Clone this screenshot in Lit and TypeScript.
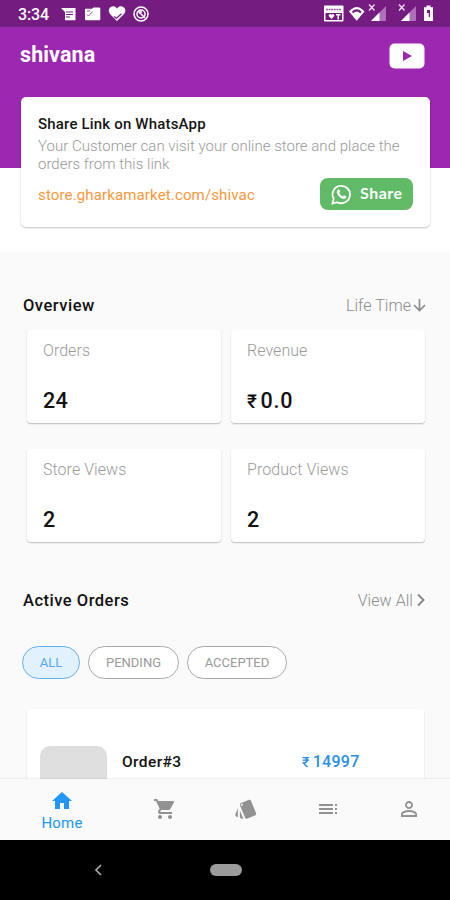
import { LitElement, html, css, svg } from "lit";
import { customElement } from "lit/decorators.js";
import { classMap } from "lit/directives/class-map.js";

const paths = {
  home: "M10 20v-6h4v6h5v-8h3L12 3 2 12h3v8z",
  cart: "M7 18c-1.1 0-1.99.9-1.99 2S5.9 22 7 22s2-.9 2-2-.9-2-2-2zM1 2v2h2l3.6 7.59-1.35 2.45c-.16.28-.25.61-.25.96 0 1.1.9 2 2 2h12v-2H7.42c-.14 0-.25-.11-.25-.25l.03-.12.9-1.63h7.45c.75 0 1.41-.41 1.75-1.03l3.58-6.49c.08-.14.12-.31.12-.48 0-.55-.45-1-1-1H5.21l-.94-2H1zm16 16c-1.1 0-1.99.9-1.99 2s.89 2 1.99 2 2-.9 2-2-.9-2-2-2z",
  style: "M2.53 19.65l1.34.56v-9.03l-2.43 5.86c-.41 1.02.08 2.19 1.09 2.61zm19.5-3.7L17.07 3.98c-.31-.75-1.04-1.21-1.81-1.23-.26 0-.53.04-.79.15L7.1 5.95c-.75.31-1.21 1.03-1.23 1.8-.01.27.04.54.15.8l4.96 11.97c.31.76 1.05 1.22 1.83 1.23.26 0 .52-.05.77-.15l7.36-3.05c1.02-.42 1.51-1.59 1.09-2.6zM7.88 8.75c-.55 0-1-.45-1-1s.45-1 1-1 1 .45 1 1-.45 1-1 1zm-2 11c0 1.1.9 2 2 2h1.45l-3.45-8.34v6.34z",
  toc: "M3 9h14V7H3v2zm0 4h14v-2H3v2zm0 4h14v-2H3v2zm16 0h2v-2h-2v2zm0-10v2h2V7h-2zm0 6h2v-2h-2v2z",
  person: "M12 5.9c1.16 0 2.1.94 2.1 2.1s-.94 2.1-2.1 2.1S9.9 9.16 9.9 8s.94-2.1 2.1-2.1m0 9c2.97 0 6.1 1.46 6.1 2.1v1.1H5.9V17c0-.64 3.13-2.1 6.1-2.1M12 4C9.79 4 8 5.79 8 8s1.79 4 4 4 4-1.79 4-4-1.79-4-4-4zm0 9c-2.67 0-8 1.34-8 4v3h16v-3c0-2.66-5.33-4-8-4z",
};

const materialIcon = (d: string) => html`<svg class="mi" viewBox="0 0 24 24"><path fill="currentColor" d=${d}></path></svg>`;

const signal = () => svg`
  <path d="M18 5V20H3z" fill="#b06fba"/><path d="M11.500 11.500V20H3z" fill="#fff"/>
  <path d="M1 3.500l5.500 6M6.500 3.500l-5.500 6" stroke="#f0dff2" stroke-width="1.300" fill="none"/>`;

@customElement("status-bar")
export class StatusBar extends LitElement {
  static styles = css`
    :host { display: flex; height: 27px; background: #751c80; color: #fff; align-items: center; flex: none; }
    .time { font: 500 16px/27px Roboto, sans-serif; padding-left: 18px; width: 43px; letter-spacing: -0.1px; padding-top: 2px; box-sizing: content-box; }
    svg { display: block; flex: none; }
    .end { margin-left: auto; }
  `;
  render() {
    return html`
      <span class="time">3:34</span>
      <svg width="90" height="27" viewBox="0 0 90 27">
        <path fill="#fff" d="M0 8h14.500v12.300H4V12z"/>
        <path d="M5 12h7M5 14.500h7M5 17h4" stroke="#751c80" stroke-width="1"/>
        <path fill="#fff" d="M24 8.800h7l1.500-1.300h5.500q1.300 0 1.300 1.300v10.500q0 1-1 1H25q-1 0-1-1z"/>
        <path d="M26 14.500l1.500 1.500 4-4.500M26 11h3" stroke="#9a5aa3" stroke-width="1" fill="none"/>
        <path fill="#fff" d="M56 21l-6.500-6.500C44.500 9 52 3 56 8.500 60 3 67.500 9 63 14z"/>
        <path d="M53 16.500l2.500 1.800 5-4.500" stroke="#751c80" stroke-width="1.200" fill="none"/>
        <circle cx="80" cy="14" r="7" stroke="#fff" stroke-width="1.500" fill="none"/>
        <circle cx="80" cy="14" r="4" stroke="#fff" stroke-width="1.500" fill="none"/>
        <path d="M77 11l7 7M79 14v-2h2" stroke="#fff" stroke-width="1.500" fill="none"/>
      </svg>
      <svg class="end" width="128" height="27" viewBox="322 0 128 27">
        <path fill="#fff" d="M324.500 5.500h18q1 0 1 1v14q0 1-1 1H325q-1 0-1-1v-14q0-1 .5-1z"/>
        <path d="M326 9.500h15.500" stroke="#9a5aa3" stroke-width="1.300" stroke-dasharray="2 .6"/>
        <path d="M325.500 13h16.500v7h-16.500z" fill="#751c80"/>
        <path d="M331.500 19l-3-3.200q1-3 3-1 2-2 3 1zM336 14h4.500v1.500H339v4h-1.500v-4H336z" fill="#fff"/>
        <path d="M356.700 20.800L349 11.500q7.700-9 15.500 0z" fill="#fff"/>
        <path d="M352.500 12.500q4.200-4.200 8.500 0" stroke="#751c80" stroke-width="2" fill="none"/>
        <g transform="translate(368 1)">${signal()}</g>
        <g transform="translate(398 1)">${signal()}</g>
        <path fill="#fff" d="M426.500 5.500h4v1.800h2.500v13.700h-9V7.300h2.500z"/>
        <path fill="#751c80" d="M427 10h3v7h-1.300v-4H427z"/>
      </svg>`;
  }
}

@customElement("share-card")
export class ShareCard extends LitElement {
  static styles = css`
    :host { display: block; height: 130px; box-sizing: border-box; background: #fff; border-radius: 5px; padding: 18px 17px 0; box-shadow: 0 1px 2px rgba(0,0,0,.24); }
    .title { font: 500 15px/18px Roboto, sans-serif; color: #161616; letter-spacing: .18px; margin-bottom: 5px; white-space: nowrap; }
    .text { font: 300 15px/17.500px Roboto, sans-serif; color: #999; letter-spacing: .02px; white-space: nowrap; }
    .row { display: flex; justify-content: space-between; align-items: center; margin-top: 5px; }
    .url { font: 400 15px/20px Roboto, sans-serif; color: #f9983c; letter-spacing: .14px; margin-top: 2px; }
    .share { display: flex; align-items: center; width: 93px; height: 32px; border-radius: 8px; background: #60ba66; box-sizing: border-box; padding-left: 11px; gap: 8px; color: #fff; font: 700 16px/30px Lato, sans-serif; letter-spacing: .5px; }
    .share span { padding-bottom: 2px; }
    svg { flex: none; }
  `;
  render() {
    return html`
      <div class="title">Share Link on WhatsApp</div>
      <div class="text">Your Customer can visit your online store and place the<br>orders from this link</div>
      <div class="row">
        <span class="url">store.gharkamarket.com/shivac</span>
        <div class="share">
          <svg width="21" height="21" viewBox="0 0 21 21">
            <path d="M1.500 19.500l1.200-4.700A8.700 8.700 0 1 1 6.200 18.200z" fill="none" stroke="#fff" stroke-width="1.800"/>
            <path d="M6.500 6q1.200-1.500 2 0l.7 1.800-1 1.300q1.200 2.400 3.500 3.300l1.300-1.200 2.100 1q.8.600-.3 2-2.300 2-6-1-4.400-4-2.300-7.200z" fill="#fff"/>
          </svg>
          <span>Share</span>
        </div>
      </div>`;
  }
}

@customElement("bottom-nav")
export class BottomNav extends LitElement {
  static styles = css`
    :host { display: grid; grid-template-columns: 124px repeat(4, 1fr); height: 61px; flex: none; background: #fafafa; box-shadow: 0 -1px 1px rgba(0,0,0,.05); color: #929292; position: relative; }
    .item { display: flex; flex-direction: column; align-items: center; padding-top: 18px; }
    .active { color: #2196f3; padding-top: 10px; }
    .mi { width: 24px; height: 24px; display: block; }
    .label { font: 400 15px/18px Roboto, sans-serif; letter-spacing: .2px; margin-top: 1px; }
  `;
  render() {
    const items = [["home", "Home"], ["cart", ""], ["style", ""], ["toc", ""], ["person", ""]] as const;
    return items.map(([icon, label]) => html`
      <div class=${classMap({ item: true, active: !!label })}>
        ${materialIcon(paths[icon])}
        ${label ? html`<span class="label">${label}</span>` : null}
      </div>`);
  }
}

@customElement("app-root")
export class AppRoot extends LitElement {
  static styles = css`
    :host { display: flex; flex-direction: column; width: 450px; height: 900px; overflow: hidden; background: #fafafa; font-family: Roboto, sans-serif; color: #111; }
    .body { flex: 1; min-height: 0; overflow: hidden; }
    .hero { height: 225px; box-sizing: border-box; padding: 0 20px 0 21px; background: linear-gradient(#9c27b0 141px, #fff 141px); }
    .top { display: flex; justify-content: space-between; align-items: center; height: 58px; margin-bottom: 12px; padding-right: 5px; color: #fff; }
    .name { font: 700 21.500px/28px Roboto, sans-serif; letter-spacing: .1px; padding-bottom: 2px; margin-left: -1px; }
    .top svg { display: block; }
    .head { display: flex; justify-content: space-between; align-items: center; height: 22px; padding: 0 24px 0 23px; }
    .overview { margin-top: 42px; }
    .orders { margin-top: 47px; }
    .h { font-size: 16.500px; font-weight: 500; letter-spacing: .5px; }
    .link { display: flex; align-items: center; font-size: 16px; font-weight: 300; color: #8c8c8c; gap: 2px; letter-spacing: .05px; }
    .grid { display: grid; grid-template-columns: 194px 194px; gap: 26px 10px; padding: 14px 0 0 27px; }
    .card { background: #fff; height: 93px; box-sizing: border-box; border-radius: 4px; padding: 11px 16px; box-shadow: 0 1px 1.500px rgba(0,0,0,.25); }
    .label { font-size: 16px; line-height: 20px; font-weight: 300; color: #9a9a9a; letter-spacing: .05px; }
    .value { font-size: 21.500px; line-height: 26px; font-weight: 500; margin-top: 27px; letter-spacing: .3px; }
    .revenue { letter-spacing: .7px; }
    .chips { display: flex; gap: 8px; padding: 35px 0 0 22px; }
    .chip { height: 33px; box-sizing: border-box; border: 1px solid #aaa; border-radius: 17px; background: #fff; color: #999; font-size: 13px; line-height: 32px; text-align: center; }
    .chip.on { border-color: #64aff5; background: #e1f1fd; color: #54a8f3; }
    .w0 { width: 58px; } .w1 { width: 91px; } .w2 { width: 100px; }
    .order { margin: 30px 26px 0 27px; height: 100px; background: #fff; border-radius: 3px; box-shadow: 0 1px 1.500px rgba(0,0,0,.2); display: flex; align-items: flex-start; padding-left: 13px; }
    .thumb { width: 67px; height: 70px; margin-top: 37px; background: #dedede; border-radius: 10px; }
    .oname { font-size: 15.500px; line-height: 20px; font-weight: 500; margin: 43px 0 0 15px; width: 180px; letter-spacing: .4px; }
    .price { font-size: 16px; line-height: 20px; font-weight: 500; margin-top: 43px; color: #2b8fe8; letter-spacing: .3px; }
    .rs { font-size: .88em; margin-right: 3px; }
    .sys { height: 60px; flex: none; background: #000; display: grid; grid-template-columns: 196px 60px 1fr; align-items: center; }
    .back { justify-self: center; display: block; }
    .pill { justify-self: center; width: 32px; height: 12px; border-radius: 6px; background: #9b9b9b; }
  `;
  render() {
    const stats = [["Orders", "24"], ["Revenue", "0.0"], ["Store Views", "2"], ["Product Views", "2"]];
    return html`
      <status-bar></status-bar>
      <div class="body">
        <div class="hero">
          <div class="top">
            <span class="name">shivana</span>
            <svg width="36" height="26" viewBox="0 0 36 26"><rect x=".5" y=".5" width="35" height="25" rx="5" fill="#fff"/><path d="M14 8l9 5-9 5z" fill="#9c27b0"/></svg>
          </div>
          <share-card></share-card>
        </div>
        <div class="head overview">
          <span class="h">Overview</span>
          <span class="link">Life Time<svg width="13" height="14" viewBox="0 0 13 14"><path d="M6.500 1v11M1 7l5.500 5.500L12 7" fill="none" stroke="#888" stroke-width="1.600"/></svg></span>
        </div>
        <div class="grid">
          ${stats.map(([l, v]) => html`<div class="card"><div class="label">${l}</div><div class=${classMap({ value: true, revenue: l === "Revenue" })}>${l === "Revenue" ? html`<span class="rs">₹</span>` : null}${v}</div></div>`)}
        </div>
        <div class="head orders">
          <span class="h">Active Orders</span>
          <span class="link">View All<svg width="11" height="14" viewBox="0 0 11 14"><path d="M3 1.500L8.500 7 3 12.500" fill="none" stroke="#888" stroke-width="1.900"/></svg></span>
        </div>
        <div class="chips">
          ${["ALL", "PENDING", "ACCEPTED"].map((c, i) => html`<div class="chip w${i} ${i === 0 ? "on" : ""}">${c}</div>`)}
        </div>
        <div class="order">
          <div class="thumb"></div>
          <div class="oname">Order#3</div>
          <div class="price"><span class="rs">₹</span>14997</div>
        </div>
      </div>
      <bottom-nav></bottom-nav>
      <div class="sys">
        <svg class="back" width="9" height="12" viewBox="0 0 9 12"><path d="M7 1L2 6l5 5" fill="none" stroke="#aaa" stroke-width="1.700"/></svg>
        <div class="pill"></div>
      </div>`;
  }
}
